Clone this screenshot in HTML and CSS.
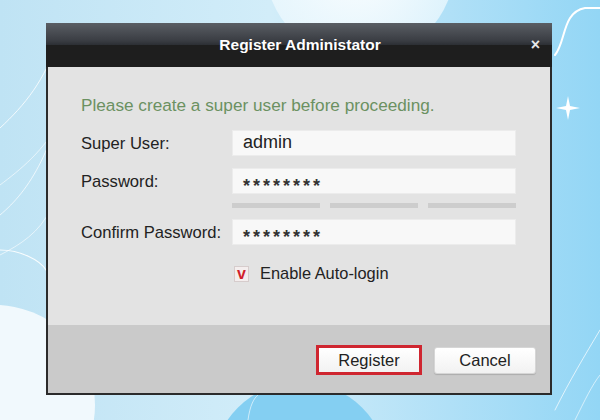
FILE: index.html
```html
<!DOCTYPE html>
<html>
<head>
<meta charset="utf-8">
<link rel="stylesheet" href="styles.css">
</head>
<body>
<div class="backdrop">
  <svg width="600" height="420" viewBox="0 0 600 420">
    <defs>
      <linearGradient id="bgg" x1="0" y1="0" x2="1" y2="0">
        <stop offset="0" stop-color="#bfe3f4"/>
        <stop offset="0.45" stop-color="#d2edf9"/>
        <stop offset="0.75" stop-color="#b0e0f7"/>
        <stop offset="1" stop-color="#93d6f5"/>
      </linearGradient>
      <radialGradient id="glow" cx="0.5" cy="0.5" r="0.5">
        <stop offset="0" stop-color="#ffffff" stop-opacity="0.95"/>
        <stop offset="1" stop-color="#eef9fe" stop-opacity="0.75"/>
      </radialGradient>
    </defs>
    <rect width="600" height="420" fill="url(#bgg)"/>
    <circle cx="360" cy="-35" r="95" fill="url(#glow)"/>
    <circle cx="-5" cy="405" r="100" fill="#f1f9fd"/>
    <circle cx="300" cy="470" r="88" fill="#84cff2"/>
    <g fill="none" stroke="#ffffff" stroke-linecap="round">
      <path d="M0,128 C25,105 45,80 58,40" stroke-width="1" opacity="0.8"/>
      <path d="M0,215 C30,190 55,150 72,60" stroke-width="1" opacity="0.7"/>
      <path d="M0,185 C20,170 45,150 60,120" stroke-width="1" opacity="0.6"/>
      <path d="M0,255 C20,245 40,232 50,210" stroke-width="1" opacity="0.6"/>
      <path d="M0,250 C20,250 40,260 46,270" stroke-width="1.2" opacity="0.9"/>
      <path d="M555,55 C566,42 562,12 585,8 L600,8" stroke-width="2"/>
      <path d="M555,410 C570,380 585,355 600,330" stroke-width="1" opacity="0.7"/>
      <path d="M575,420 C585,400 592,385 600,375" stroke-width="1" opacity="0.6"/>
      <path d="M248,420 C250,405 254,398 258,395" stroke-width="1" opacity="0.6"/>
    </g>
    <path d="M568,96 L570,106 L580,108 L570,110 L568,120 L566,110 L556,108 L566,106 Z" fill="#ffffff"/>
  </svg>
</div>

<div class="dialog">
  <div class="titlebar">
    <span class="title">Register Administator</span>
    <span class="close">×</span>
  </div>
  <div class="content">
    <p class="intro">Please create a super user before proceeding.</p>
    <div class="row">
      <label class="label">Super User:</label>
      <div class="input">admin</div>
    </div>
    <div class="row r2">
      <label class="label">Password:</label>
      <div class="input pw">********</div>
    </div>
    <div class="strength">
      <span class="seg"></span><span class="seg"></span><span class="seg"></span>
    </div>
    <div class="row r3">
      <label class="label">Confirm Password:</label>
      <div class="input pw">********</div>
    </div>
    <div class="check-row">
      <span class="checkbox">v</span>
      <span class="check-label">Enable Auto-login</span>
    </div>
  </div>
  <div class="footer">
    <div class="highlight"><button class="btn">Register</button></div>
    <button class="btn cancel">Cancel</button>
  </div>
</div>
</body>
</html>
```

FILE: styles.css
```css
html, body {
  margin: 0;
  padding: 0;
}
body {
  width: 600px;
  height: 420px;
  overflow: hidden;
  font-family: "Liberation Sans", Arial, sans-serif;
  background: #c6e8f7;
  padding: 23px 0 0 46px;
  box-sizing: border-box;
}
.backdrop {
  position: fixed;
  left: 0;
  top: 0;
  width: 600px;
  height: 420px;
  z-index: 0;
}
.backdrop svg {
  display: block;
}
.dialog {
  position: relative;
  z-index: 1;
  width: 506px;
  height: 372px;
  box-sizing: border-box;
  border: 2px solid #2b2b2b;
  border-top: 0;
  display: flex;
  flex-direction: column;
  background: #e3e3e3;
}
.titlebar {
  height: 44px;
  margin: 0 -2px;
  background: linear-gradient(to bottom, #5a5e64 0%, #3a3d43 40%, #2c2f34 50%, #1e1e1e 51%, #1e1e1e 100%);
  display: flex;
  align-items: center;
  justify-content: center;
  position: relative;
  color: #fff;
}
.title {
  font-weight: bold;
  font-size: 15.5px;
  margin-left: 2px;
}
.close {
  position: absolute;
  right: 12px;
  top: 12px;
  font-size: 16px;
  font-weight: bold;
  line-height: 20px;
  color: #e8e8e8;
}
.content {
  flex: 1;
  padding: 28px 0 0 33px;
  display: flex;
  flex-direction: column;
}
.intro {
  margin: 0;
  font-size: 17.2px;
  line-height: 21px;
  color: #6b9161;
}
.row {
  display: flex;
  align-items: center;
  margin-top: 14px;
}
.row.r2 {
  margin-top: 12px;
}
.row.r3 {
  margin-top: 11px;
}
.label {
  width: 151px;
  font-size: 16.6px;
  color: #222;
  padding-top: 2px;
}
.input {
  width: 284px;
  height: 26px;
  box-sizing: border-box;
  background: #f8f8f8;
  border: 1px solid #ececec;
  padding-left: 10px;
  font-size: 18px;
  line-height: 22px;
  color: #222;
}
.input.pw {
  font-size: 18px;
  font-weight: bold;
  letter-spacing: 3px;
  color: #333;
  line-height: 24px;
  padding-top: 5px;
}
.strength {
  display: flex;
  gap: 10px;
  margin: 9px 0 0 151px;
}
.seg {
  width: 88px;
  height: 5px;
  background: #cdcdcd;
}
.check-row {
  display: flex;
  align-items: center;
  margin: 19px 0 0 153px;
}
.checkbox {
  width: 15px;
  height: 16px;
  box-sizing: border-box;
  border: 1px solid #d6cccc;
  background: #f4eeee;
  color: #d11f2c;
  font-weight: bold;
  font-size: 16px;
  line-height: 13px;
  text-align: center;
}
.check-label {
  margin-left: 11px;
  font-size: 16.4px;
  color: #222;
}
.footer {
  height: 68px;
  background: #cacaca;
  display: flex;
  align-items: center;
  justify-content: flex-end;
  gap: 12px;
  padding: 2px 14px 0 0;
  box-sizing: border-box;
}
.highlight {
  border: 3px solid #cf2630;
  display: flex;
}
.btn {
  font-family: "Liberation Sans", Arial, sans-serif;
  font-size: 16.5px;
  color: #222;
  width: 100px;
  height: 24px;
  border: 0;
  background: linear-gradient(to bottom, #ffffff, #f2f2f2);
  padding: 0;
}
.btn.cancel {
  width: 102px;
  height: 27px;
  border-radius: 3px;
  border: 1px solid #d6d6d6;
  box-shadow: 0 1px 1px rgba(0,0,0,0.15);
}
```
